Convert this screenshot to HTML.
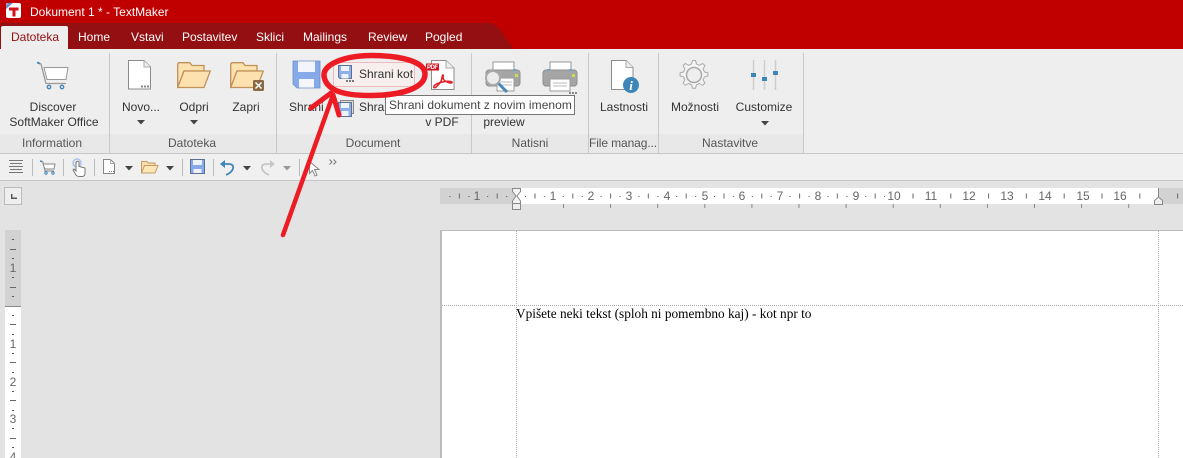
<!DOCTYPE html>
<html><head><meta charset="utf-8"><style>
html,body{margin:0;padding:0;width:1183px;height:458px;overflow:hidden}
#w{position:relative;width:1183px;height:458px;overflow:hidden;background:#e3e3e3;font-family:"Liberation Sans",sans-serif;font-size:12px;color:#333}
.a{position:absolute}
.t{position:absolute;white-space:nowrap;line-height:14px}
.c{transform:translateX(-50%)}
.tab{color:#fff;top:30px}
.g{color:#555;top:136px;transform:translateX(-50%);white-space:nowrap;position:absolute;line-height:14px}
.sep{position:absolute;top:53px;width:1px;height:100px;background:#c8c8c8}
.tsep{position:absolute;top:159px;width:1px;height:17px;background:#bbb}
.rn{position:absolute;top:189px;color:#666;font-size:12px;line-height:14px;transform:translateX(-50%)}
.vn{position:absolute;left:13px;color:#666;font-size:12px;line-height:14px;transform:translateX(-50%)}
svg{position:absolute;overflow:visible}
</style></head><body><div id="w">
<div class="a" style="left:0;top:0;width:1183px;height:49px;background:#c00000"></div>
<svg style="left:0;top:0" width="1183" height="49"><path d="M0 23H487C495 23 498 27 502 32L513 49H0Z" fill="#930f12"/></svg>
<div class="a" style="left:6px;top:3px;width:15px;height:15px;background:#fff;border-radius:2px"></div>
<svg style="left:6px;top:3px" width="15" height="15"><path d="M0 6L7 0H2L0 2Z" fill="#6d8fd0"/><path d="M3 4.500H12.500V7.500H9.500V13.500H6.500V7.500H3Z" fill="#d0101a"/></svg>
<div class="t" style="left:30px;top:5px;color:#fff">Dokument 1 * - TextMaker</div>
<div class="a" style="left:1px;top:26px;width:67px;height:23px;background:#eee;border-radius:2px 2px 0 0"></div>
<div class="t" style="left:11px;top:30px;color:#930f12">Datoteka</div>
<div class="t tab" style="left:78px">Home</div>
<div class="t tab" style="left:131px">Vstavi</div>
<div class="t tab" style="left:182px">Postavitev</div>
<div class="t tab" style="left:256px">Sklici</div>
<div class="t tab" style="left:303px">Mailings</div>
<div class="t tab" style="left:368px">Review</div>
<div class="t tab" style="left:425px">Pogled</div>

<div class="a" style="left:0;top:49px;width:1183px;height:104px;background:#eeeeee"></div>
<div class="a" style="left:0;top:134px;width:803px;height:19px;background:#e8e8e8"></div>
<div class="a" style="left:0;top:153px;width:1183px;height:1px;background:#c6c6c6"></div>
<div class="a" style="left:0;top:154px;width:1183px;height:26px;background:#f0f0f0"></div>
<div class="a" style="left:0;top:180px;width:1183px;height:1px;background:#c6c6c6"></div>
<div class="sep" style="left:109px"></div><div class="sep" style="left:276px"></div><div class="sep" style="left:471px"></div><div class="sep" style="left:588px"></div><div class="sep" style="left:658px"></div><div class="sep" style="left:803px"></div>

<div class="g" style="left:52px">Information</div>
<div class="g" style="left:192px">Datoteka</div>
<div class="g" style="left:373px">Document</div>
<div class="g" style="left:530px">Natisni</div>
<div class="g" style="left:623px;letter-spacing:-.1px">File manag...</div>
<div class="g" style="left:730px">Nastavitve</div>

<!-- cart -->
<svg style="left:36px;top:60px" width="34" height="32" fill="none"><path d="M3 3.500L5 4L10 23.500H30" stroke="#999" stroke-width="1.300"/><path d="M1 2.500L4 3.500" stroke="#4a86b8" stroke-width="1.800"/><path d="M8 7.500H32L30 19.500H11Z" fill="#fff" stroke="#999"/><circle cx="13" cy="27" r="1.700" stroke="#4a86b8" stroke-width="1.400"/><circle cx="26" cy="27" r="1.700" stroke="#4a86b8" stroke-width="1.400"/></svg>
<div class="t c" style="left:53px;top:100px">Discover</div>
<div class="t c" style="left:54px;top:115px">SoftMaker Office</div>

<!-- new doc -->
<svg style="left:128px;top:60px" width="24" height="30"><path d="M.500.500H16L22.500 7V29H.500Z" fill="#fff" stroke="#8c8c8c"/><path d="M16 .500V7H22.500" fill="#eee" stroke="#aaa"/><path d="M13 25.500h2v2h-2zM16 25.500h2v2h-2zM19 25.500h2v2h-2z" fill="#888"/></svg>
<div class="t c" style="left:141px;top:100px">Novo...</div>
<svg style="left:137px;top:120px" width="8" height="5"><path d="M0 0H8L4 4.500Z" fill="#444"/></svg>

<!-- open -->
<svg style="left:177px;top:62px" width="34" height="27"><path d="M.700 25.500V2.500Q.700.700 2.500.700H13L15 3.500H27V9H7L.700 25.500Z" fill="#fde2b0" stroke="#c09058" stroke-width="1.300" stroke-linejoin="round"/><path d="M.700 25.500L7 9H33.300L27 25.500Z" fill="#fde2b0" stroke="#c09058" stroke-width="1.300" stroke-linejoin="round"/></svg>
<div class="t c" style="left:194px;top:100px">Odpri</div>
<svg style="left:190px;top:120px" width="8" height="5"><path d="M0 0H8L4 4.500Z" fill="#444"/></svg>

<!-- close -->
<svg style="left:230px;top:62px" width="36" height="30"><path d="M.700 25.500V2.500Q.700.700 2.500.700H13L15 3.500H27V9H7L.700 25.500Z" fill="#fde2b0" stroke="#c09058" stroke-width="1.300" stroke-linejoin="round"/><path d="M.700 25.500L7 9H33.300L27 25.500Z" fill="#fde2b0" stroke="#c09058" stroke-width="1.300" stroke-linejoin="round"/><rect x="23" y="18" width="11" height="11" rx="1.500" fill="#8a6a45"/><path d="M25.500 20.500L31.500 26.500M31.500 20.500L25.500 26.500" stroke="#fff" stroke-width="1.500"/></svg>
<div class="t c" style="left:246px;top:100px">Zapri</div>

<!-- save -->
<svg style="left:293px;top:61px" width="28" height="27"><path d="M0 0H27V27H4L0 23Z" fill="#86a9ea"/><path d="M5 0H22V11H5Z" fill="#f2f5fb"/><path d="M6 18H21V27H6Z" fill="#f4f6fb"/><path d="M0 0H27V27H4L0 23Z" fill="none" stroke="#6f8fc9" stroke-width=".8"/></svg>
<div class="t" style="left:289px;top:100px">Shrani</div>

<div class="a" style="left:333px;top:62px;width:80px;height:23px;background:#f7eeee;border:1px solid #ecbcbc;border-radius:2px"></div>
<svg style="left:338px;top:65px" width="18" height="18"><path d="M.500.500H13.500V13.500H2L.500 12Z" fill="#8eaee8" stroke="#5e6f93"/><path d="M3 1H11V6H3Z" fill="#eef2fa"/><path d="M3.500 9H10.500V13.500H3.500Z" fill="#eef2fa"/><path d="M8 15h2v2H8zM11 15h2v2h-2zM14 15h2v2h-2z" fill="#777"/></svg>
<div class="t" style="left:359px;top:67px">Shrani kot</div>

<svg style="left:338px;top:100px" width="18" height="18"><path d="M2.500 .500H15.500V13.500H2.500Z" fill="#ddd" stroke="#888"/><path d="M.500 2.500H13.500V16.500H.500Z" fill="#8eaee8" stroke="#5e6f93"/><path d="M3 3H11V8H3ZM3.500 11H10.500V16H3.500Z" fill="#eef2fa"/></svg>
<div class="t" style="left:359px;top:100px">Shrani</div>

<!-- pdf -->
<svg style="left:425px;top:60px" width="30" height="30"><path d="M6.500.500H21L29 8V29.500H6.500Z" fill="#fff" stroke="#8c8c8c"/><path d="M21 .500V8H29" fill="#eee" stroke="#aaa"/><path d="M18 15C16 15 19 20 13 25C10 29 8 28 9 26C11 23 22 20 27 22C28 24 22 23 19 20C17 18 19 15 18 15Z" fill="none" stroke="#e0202a" stroke-width="1.500"/><rect x="1" y="3.500" width="13" height="7" fill="#d0101a"/><text x="2" y="9" font-size="6" font-weight="700" fill="#fff" font-family="Liberation Sans" textLength="11">PDF</text></svg>
<div class="t c" style="left:442px;top:115px">v PDF</div>

<!-- printers -->
<svg style="left:485px;top:60px" width="36" height="34"><path d="M8 2H29V12H8Z" fill="#fff" stroke="#999"/><rect x="1" y="10" width="34" height="16" rx="3" fill="#a5a5a5" stroke="#8f8f8f"/><path d="M4 10h3v2H4zM28 9h3v2h-3z" fill="#6ea3cc"/><path d="M30 14h3v3h-3z" fill="#c6e04a"/><path d="M12 18H29V31H12Z" fill="#fff" stroke="#999"/><path d="M15 22H27M15 25H27" stroke="#bbb"/><path d="M13 23L22 32" stroke="#4a86b8" stroke-width="3"/><circle cx="8" cy="18" r="7" fill="#ececec" stroke="#aaa" stroke-width="2"/></svg>
<div class="t c" style="left:504px;top:115px">preview</div>
<svg style="left:542px;top:60px" width="36" height="34"><path d="M8 2H29V12H8Z" fill="#fff" stroke="#999"/><rect x="1" y="10" width="34" height="16" rx="3" fill="#a5a5a5" stroke="#8f8f8f"/><path d="M5 9h3v2H5zM27 9h3v2h-3z" fill="#6ea3cc"/><path d="M30 14h3v3h-3z" fill="#c6e04a"/><path d="M8 19H28V31H8Z" fill="#fff" stroke="#999"/><path d="M11 23H25M11 26H25" stroke="#bbb"/><path d="M27 32h2v2h-2zM30 32h2v2h-2zM33 32h2v2h-2z" fill="#888"/></svg>

<!-- lastnosti -->
<svg style="left:611px;top:60px" width="29" height="33"><path d="M.500.500H15L22 7.500V29.500H.500Z" fill="#fff" stroke="#8c8c8c"/><path d="M15 .500V7.500H22" fill="#eee" stroke="#aaa"/><circle cx="20" cy="25" r="8" fill="#3f86b8"/><text x="20" y="30" text-anchor="middle" font-family="Liberation Serif" font-style="italic" font-weight="700" font-size="13" fill="#fff">i</text></svg>
<div class="t c" style="left:624px;top:100px">Lastnosti</div>

<!-- gear -->
<svg style="left:679px;top:60px" width="30" height="30" fill="none"><path d="M15 1.500l3 0 1 3.500 3 1.300 3.200-1.800 2.200 2.200-1.800 3.200 1.300 3 3.500 1v3l-3.500 1-1.300 3 1.800 3.200-2.200 2.200-3.200-1.800-3 1.300-1 3.500h-3l-1-3.500-3-1.300-3.200 1.800-2.200-2.200 1.800-3.200-1.300-3-3.500-1v-3l3.500-1 1.300-3-1.800-3.200 2.200-2.200 3.200 1.800 3-1.300 1-3.500Z" stroke="#aaa" fill="#f4f4f4" transform="translate(-1.500 -1)"/><circle cx="15" cy="15" r="7.500" stroke="#aaa" fill="#eee" stroke-width="1.500"/></svg>
<div class="t c" style="left:695px;top:100px">Možnosti</div>

<!-- customize -->
<svg style="left:750px;top:59px" width="30" height="32"><path d="M3.500 1V31M14.500 1V31M25.500 1V31" stroke="#cdcdcd" stroke-width="1.500"/><path d="M1 14h5v4H1zM12 18h5v4h-5zM23 12h5v4h-5z" fill="#3f86b8"/></svg>
<div class="t c" style="left:764px;top:100px">Customize</div>
<svg style="left:761px;top:121px" width="8" height="5"><path d="M0 0H8L4 4.500Z" fill="#444"/></svg>

<!-- toolbar -->
<svg style="left:9px;top:160px" width="14" height="14"><path d="M0 .500H14M1 3.500H13M0 6.500H14M1 9.500H13M0 12.500H14" stroke="#777"/></svg>
<div class="tsep" style="left:32px"></div>
<svg style="left:39px;top:160px" width="17" height="15" fill="none"><path d="M1 1L4 2L6 11H15" stroke="#888"/><path d="M4 4H16L15 9H6Z" fill="#fff" stroke="#888"/><path d="M1 1L3 1.500" stroke="#3f86b8" stroke-width="1.500"/><circle cx="7" cy="13" r="1.200" stroke="#3f86b8"/><circle cx="14" cy="13" r="1.200" stroke="#3f86b8"/></svg>
<div class="tsep" style="left:63px"></div>
<svg style="left:71px;top:158px" width="15" height="20" fill="none"><circle cx="6" cy="5" r="4" stroke="#a9c3ee" stroke-width="1.500"/><path d="M5 4V13L3 11L2 12L5 17Q6 18.500 9 18.500H11Q14 18.500 14 15V10L8 8.500V4Q6.500 2.500 5 4Z" fill="#fff" stroke="#777"/></svg>
<div class="tsep" style="left:94px"></div>
<svg style="left:103px;top:159px" width="12" height="15"><path d="M.500.500H7.500L11.500 4.500V14.500H.500Z" fill="#fff" stroke="#888"/><path d="M7.500.500V4.500H11.500" fill="none" stroke="#aaa"/><path d="M6 12h1v1H6zM8 12h1v1H8zM10 12h1v1h-1z" fill="#777"/></svg>
<svg style="left:125px;top:166px" width="8" height="5"><path d="M0 0H8L4 4.500Z" fill="#444"/></svg>
<svg style="left:141px;top:160px" width="18" height="14"><path d="M.500 13V1.500H6L7.500 3H14V13Z" fill="#fbdfa8" stroke="#c39a66"/><path d="M.500 13L3.500 5.500H17L14 13Z" fill="#fee5b4" stroke="#c39a66"/></svg>
<svg style="left:166px;top:166px" width="8" height="5"><path d="M0 0H8L4 4.500Z" fill="#444"/></svg>
<div class="tsep" style="left:182px"></div>
<svg style="left:190px;top:159px" width="15" height="15"><path d="M.500.500H14.500V14.500H.500Z" fill="#86a9ea" stroke="#5e6f93"/><path d="M3 1H12V6H3ZM3.500 10H11.500V14H3.500Z" fill="#eef2fa"/></svg>
<div class="tsep" style="left:213px"></div>
<svg style="left:220px;top:159px" width="15" height="17" fill="none"><path d="M3 5H9C15 5 15 12 6 16" stroke="#3f86b8" stroke-width="1.800"/><path d="M5 1V9L0 5Z" fill="#3f86b8"/></svg>
<svg style="left:243px;top:166px" width="8" height="5"><path d="M0 0H8L4 4.500Z" fill="#444"/></svg>
<svg style="left:260px;top:159px" width="15" height="17" fill="none"><path d="M12 5H6C0 5 0 12 9 16" stroke="#c6c6c6" stroke-width="1.800"/><path d="M10 1V9L15 5Z" fill="#c6c6c6"/></svg>
<svg style="left:283px;top:166px" width="8" height="5"><path d="M0 0H8L4 4.500Z" fill="#999"/></svg>
<div class="tsep" style="left:299px"></div>
<svg style="left:309px;top:161px" width="11" height="16"><path d="M.500.500V12.500L3.500 9.500L6 15L8 14L5.500 8.500H10Z" fill="#fff" stroke="#888"/></svg>
<svg style="left:329px;top:159px" width="8" height="7" fill="none"><path d="M.500.500L3 3L.500 5.500M4.500.500L7 3L4.500 5.500" stroke="#777"/></svg>

<!-- corner -->
<div class="a" style="left:4px;top:187px;width:16px;height:16px;background:#eee;border:1px solid #bbb"></div>
<svg style="left:11px;top:194px" width="6" height="5"><path d="M0 0H1.500V3.500H6V5H0Z" fill="#555"/></svg>

<!-- h ruler -->
<div class="a" style="left:440px;top:188px;width:76px;height:16px;background:#d2d2d2"></div>
<div class="a" style="left:516px;top:188px;width:642px;height:16px;background:#fff"></div>
<div class="a" style="left:1158px;top:188px;width:25px;height:16px;background:#d2d2d2"></div>
<svg style="left:0;top:0" width="1183" height="458">
<defs>
<pattern id="p" x="515" y="188" width="37.800" height="16" patternUnits="userSpaceOnUse"><path d="M19.500 5.500h1v5h-1z" fill="#666"/></pattern>
<pattern id="d" x="515" y="188" width="37.800" height="16" patternUnits="userSpaceOnUse"><path d="M10 8h1v1h-1zM29 8h1v1h-1z" fill="#555"/></pattern>
<pattern id="q" x="563" y="204" width="47.100" height="4" patternUnits="userSpaceOnUse"><rect x="0" y="0" width="1" height="4" fill="#888"/></pattern>
</defs>
<rect x="440" y="188" width="743" height="16" fill="url(#p)"/>
<rect x="440" y="188" width="445" height="16" fill="url(#d)"/>
<rect x="563" y="204" width="600" height="4" fill="url(#q)"/>
<path d="M512.500 188.500H520.500V191.500L517 196L520.500 201V203.500H512.500V201L516 196L512.500 191.500Z" fill="#f4f4f4" stroke="#888"/>
<rect x="512.500" y="203.500" width="8" height="6" fill="#eee" stroke="#888"/>
<path d="M1158.500 188V197" stroke="#888"/>
<path d="M1154.500 204.500V200.500L1158.500 197L1162.500 200.500V204.500Z" fill="#eee" stroke="#888"/>
</svg>
<div class="rn" style="left:477px">1</div>
<div class="rn" style="left:553px">1</div><div class="rn" style="left:591px">2</div><div class="rn" style="left:629px">3</div><div class="rn" style="left:667px">4</div><div class="rn" style="left:705px">5</div><div class="rn" style="left:742px">6</div><div class="rn" style="left:780px">7</div><div class="rn" style="left:818px">8</div><div class="rn" style="left:856px">9</div><div class="rn" style="left:894px">10</div><div class="rn" style="left:931px">11</div><div class="rn" style="left:969px">12</div><div class="rn" style="left:1007px">13</div><div class="rn" style="left:1045px">14</div><div class="rn" style="left:1083px">15</div><div class="rn" style="left:1120px">16</div>

<!-- v ruler -->
<div class="a" style="left:5px;top:230px;width:16px;height:76px;background:#d2d2d2"></div>
<div class="a" style="left:5px;top:306px;width:16px;height:152px;background:#fff;border-top:1px solid #888;box-sizing:border-box"></div>
<svg style="left:0;top:0" width="30" height="458"><path d="M12 239h2v1h-2zM12 258h2v1h-2zM12 277h2v1h-2zM12 296h2v1h-2zM12 315h2v1h-2zM12 334h2v1h-2zM12 353h2v1h-2zM12 372h2v1h-2zM12 391h2v1h-2zM12 410h2v1h-2zM12 428h2v1h-2zM12 447h2v1h-2z" fill="#555"/><path d="M10 249h6v1h-6zM10 287h6v1h-6zM10 324h6v1h-6zM10 362h6v1h-6zM10 400h6v1h-6zM10 438h6v1h-6z" fill="#666"/></svg>
<div class="vn" style="top:261px">1</div><div class="vn" style="top:337px">1</div><div class="vn" style="top:375px">2</div><div class="vn" style="top:412px">3</div><div class="vn" style="top:450px">4</div>

<!-- page -->
<div class="a" style="left:440px;top:230px;width:743px;height:228px;background:#fff;border-left:2px solid #bbb;border-top:1px solid #bbb;box-sizing:border-box"></div>
<div class="a" style="left:442px;top:305px;width:741px;border-top:1px dotted #aaa"></div>
<div class="a" style="left:516px;top:231px;height:227px;border-left:1px dotted #aaa"></div>
<div class="a" style="left:1158px;top:231px;height:227px;border-left:1px dotted #aaa"></div>
<div class="t" style="left:516px;top:307px;font-family:'Liberation Serif',serif;font-size:13.3px;color:#000">Vpišete neki tekst (sploh ni pomembno kaj) - kot npr to</div>

<!-- tooltip -->
<div class="a" style="left:385px;top:95px;width:188px;height:18px;background:#fff;border:1px solid #767676"></div>
<div class="t" style="left:389px;top:98px;color:#444;letter-spacing:.05px">Shrani dokument z novim imenom</div>

<!-- annotation -->
<svg style="left:0;top:0;pointer-events:none" width="1183" height="458" fill="none">
<path d="M324 76C323 64 345 55.500 372 55.500C402 55.500 425 62 425 74C425 88 402 95.500 370 95.500C342 95.500 326 90 324 76Z" stroke="#ed1c24" stroke-width="5.500"/>
<path d="M283 235L333 95" stroke="#ed1c24" stroke-width="4.500" stroke-linecap="round"/>
<path d="M311 108L331 93M333 95L339 115" stroke="#ed1c24" stroke-width="5" stroke-linecap="round"/>
</svg>
</div></body></html>
